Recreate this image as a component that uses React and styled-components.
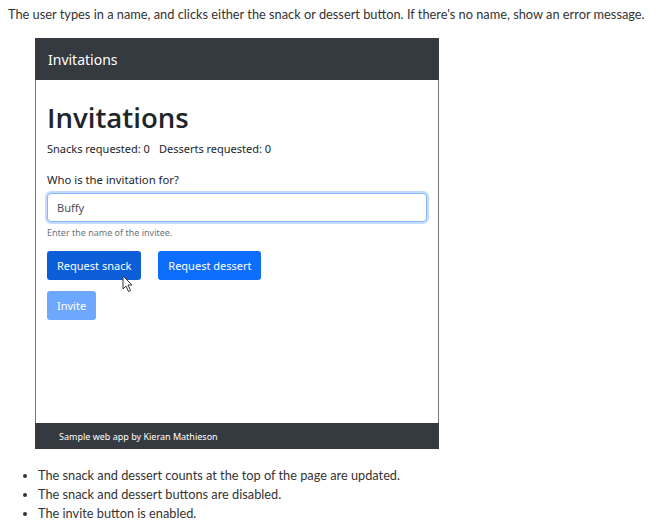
import React from 'react';
import styled, { createGlobalStyle } from 'styled-components';

const Global = createGlobalStyle`
  body {
    margin: 0;
    padding: 5px 8px 0 8px;
    background: #fff;
    font-family: Lato, "Open Sans", sans-serif;
    color: #333;
  }
`;

const Intro = styled.p`
  margin: 0;
  font-size: 12.8px;
  line-height: 18px;
  white-space: nowrap;
  color: #333;
`;

const Frame = styled.div`
  margin: 15px 0 0 27px;
  width: 402px;
  height: 409px;
  border: 1px solid #777;
  display: flex;
  flex-direction: column;
  font-family: "Noto Sans", "Open Sans", sans-serif;
`;

const NavBar = styled.div`
  height: 42px;
  background: #343a40;
  color: #fff;
  display: flex;
  align-items: center;
  font-size: 14px;
  margin: -1px -1px 0 -1px;
  padding-left: 13px;
`;

const Main = styled.div`
  flex: 1;
  padding: 18px 11px 0 11px;
  display: flex;
  flex-direction: column;
  align-items: flex-start;
`;

const Heading = styled.h1`
  margin: 0;
  font-family: "Open Sans", "Noto Sans", sans-serif;
  font-size: 27.6px;
  font-weight: 600;
  color: #212529;
  line-height: 38px;
`;

const Counts = styled.div`
  margin-top: 5px;
  font-size: 11px;
  color: #212529;
  display: flex;
  gap: 9px;
`;

const Label = styled.label`
  margin-top: 16px;
  font-size: 11.3px;
  color: #212529;
`;

const Input = styled.input`
  margin-top: 6px;
  box-sizing: border-box;
  width: 380px;
  height: 29px;
  border: 1px solid #86b7fe;
  border-radius: 4px;
  box-shadow: 0 0 0 2px rgba(13, 110, 253, 0.25);
  padding: 0 9px;
  font-family: inherit;
  font-size: 11px;
  color: #495057;
  outline: none;
`;

const Help = styled.small`
  margin-top: 4px;
  font-size: 9px;
  color: #6c757d;
`;

const ButtonRow = styled.div`
  margin-top: 12px;
  display: flex;
  gap: 17px;
  position: relative;
`;

const Button = styled.button`
  height: 29px;
  padding: 0 10px;
  border: none;
  border-radius: 3px;
  font-family: inherit;
  font-size: 11px;
  color: #fff;
  background: ${(p) => (p.$variant === 'hover' ? '#0b5ed7' : p.$variant === 'disabled' ? '#6ea8fe' : '#0d6efd')};
`;

const InviteRow = styled.div`
  margin-top: 11px;
`;

const Cursor = styled.svg`
  position: absolute;
  left: 75px;
  top: 24px;
`;

const Footer = styled.div`
  height: 26px;
  background: #343a40;
  color: #fff;
  font-size: 9px;
  display: flex;
  align-items: center;
  padding-left: 24px;
  margin: 0 -1px -1px -1px;
`;

const List = styled.ul`
  margin: 17px 0 0 0;
  padding-left: 30px;
  font-size: 12.75px;
  line-height: 19px;
  color: #333;
`;

export default function App() {
  return (
    <>
      <Global />
      <Intro>
        The user types in a name, and clicks either the snack or dessert button. If there's no name, show an error message.
      </Intro>
      <Frame>
        <NavBar>Invitations</NavBar>
        <Main>
          <Heading>Invitations</Heading>
          <Counts>
            <span>Snacks requested: 0</span>
            <span>Desserts requested: 0</span>
          </Counts>
          <Label>Who is the invitation for?</Label>
          <Input defaultValue="Buffy" />
          <Help>Enter the name of the invitee.</Help>
          <ButtonRow>
            <Button $variant="hover">Request snack</Button>
            <Button>Request dessert</Button>
            <Cursor width="12" height="18" viewBox="0 0 12 18">
              <path d="M1 1 L1 14 L4 11 L6.5 16.5 L8.5 15.5 L6 10 L10 10 Z" fill="#fff" stroke="#333" strokeWidth="1" strokeLinejoin="round" />
            </Cursor>
          </ButtonRow>
          <InviteRow>
            <Button $variant="disabled">Invite</Button>
          </InviteRow>
        </Main>
        <Footer>Sample web app by Kieran Mathieson</Footer>
      </Frame>
      <List>
        <li>The snack and dessert counts at the top of the page are updated.</li>
        <li>The snack and dessert buttons are disabled.</li>
        <li>The invite button is enabled.</li>
      </List>
    </>
  );
}
